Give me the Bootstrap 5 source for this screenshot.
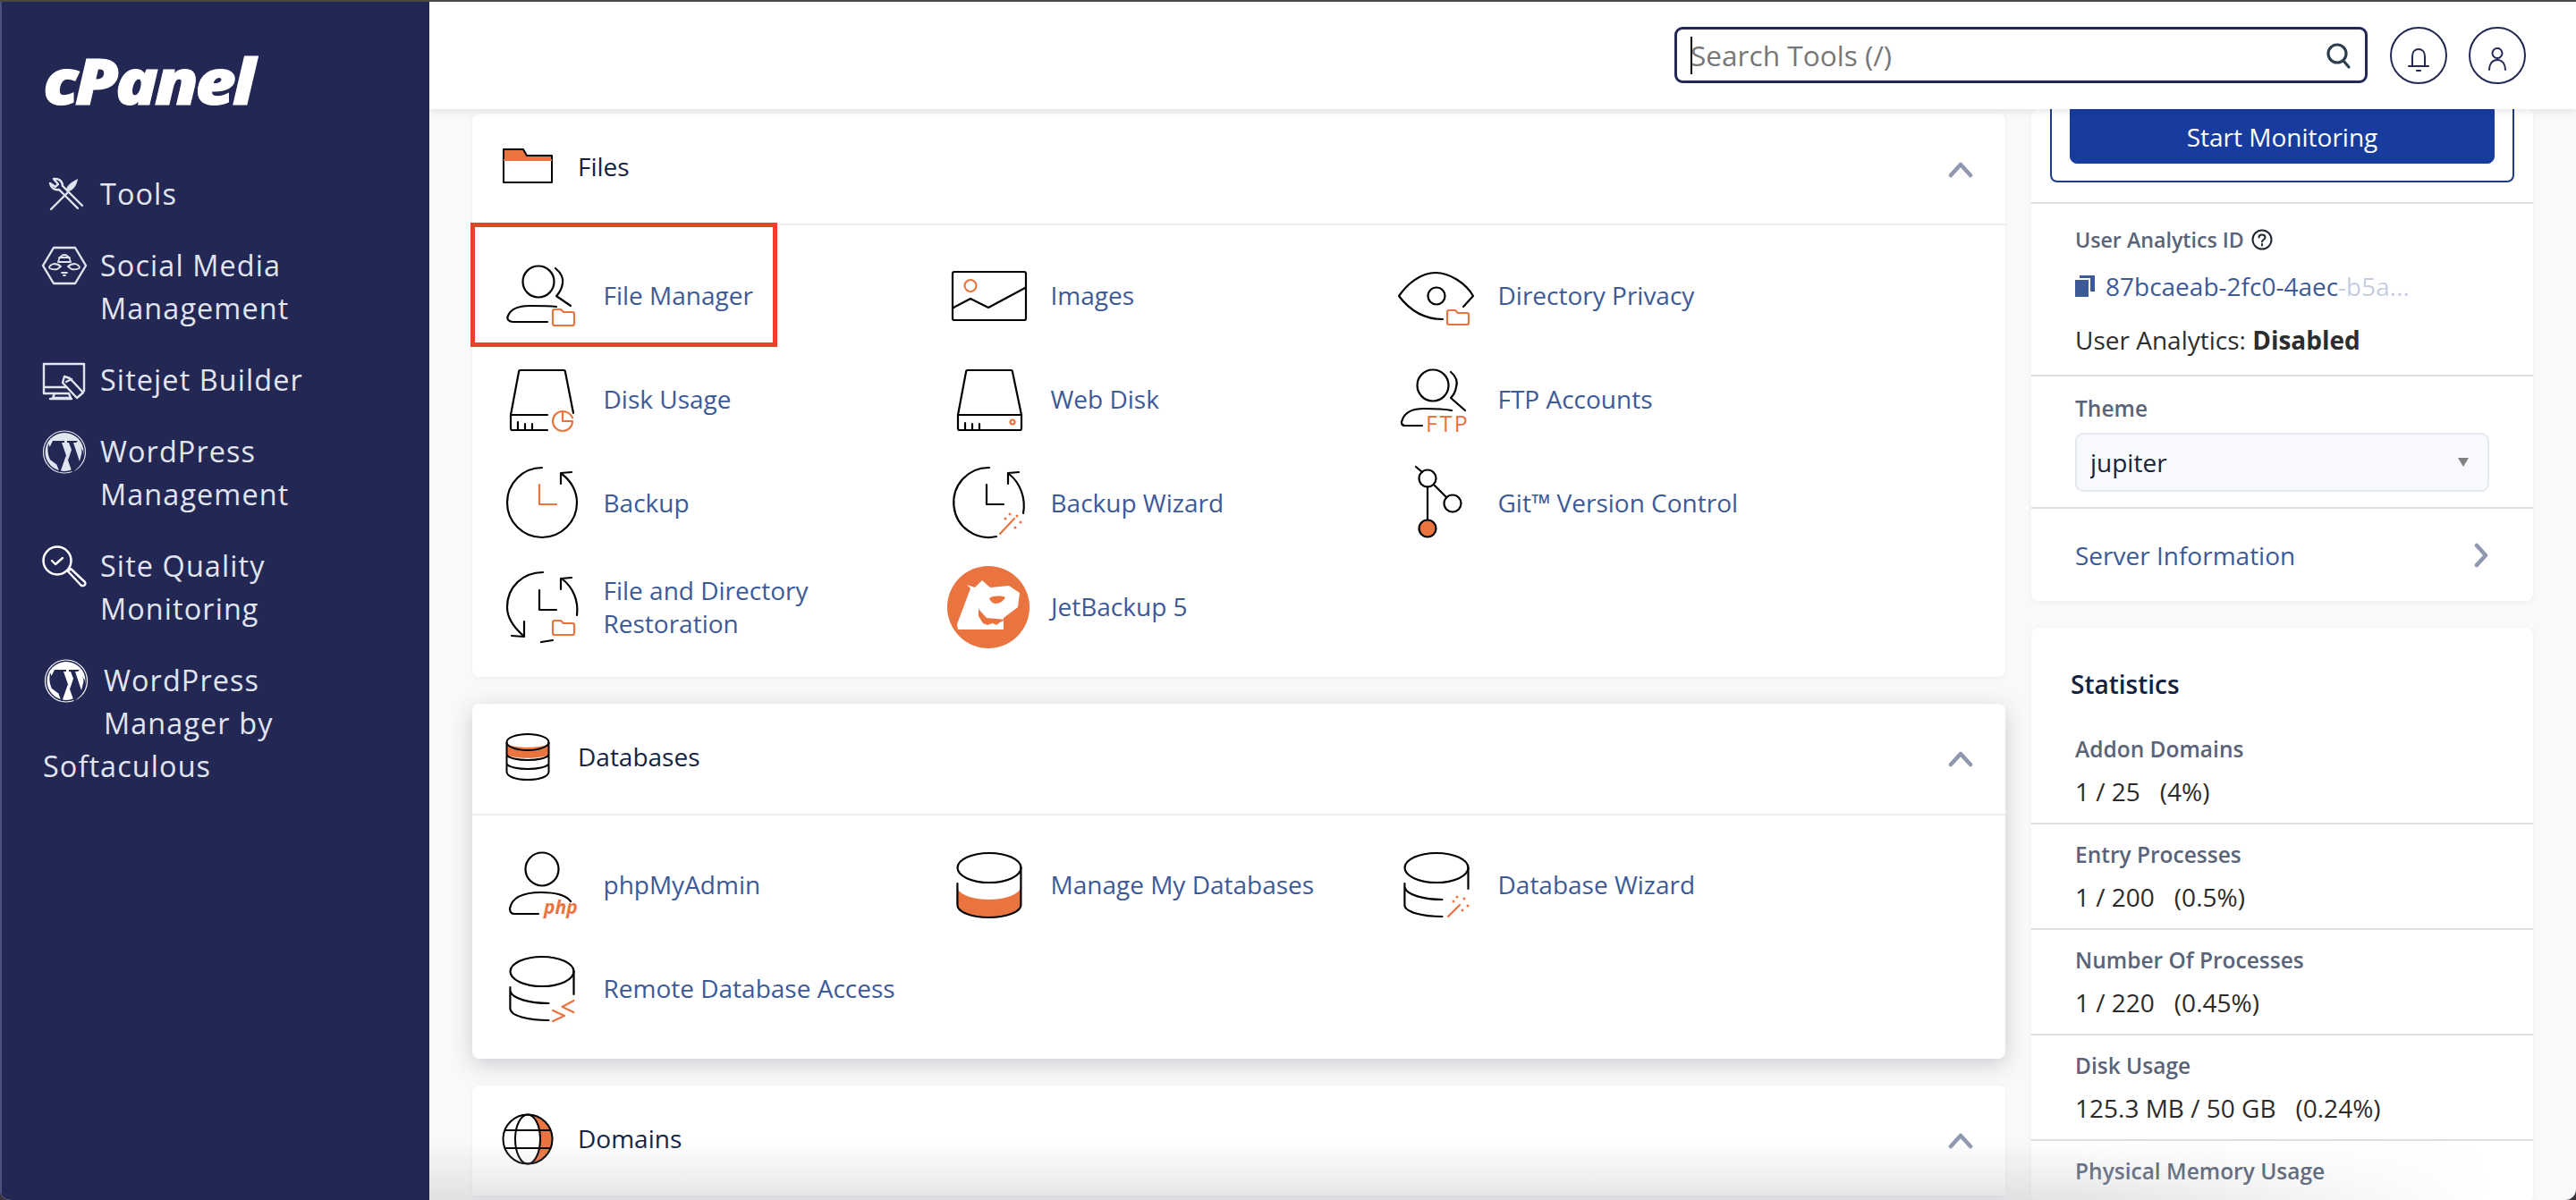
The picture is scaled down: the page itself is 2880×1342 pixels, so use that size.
<!DOCTYPE html>
<html lang="en">
<head>
<meta charset="utf-8">
<title>cPanel - Tools</title>
<link href="https://cdn.jsdelivr.net/npm/bootstrap@5.3.0/dist/css/bootstrap.min.css" rel="stylesheet">
<style>
html,body{height:1342px;overflow:hidden;background:#3b343c}
body{font-family:"Open Sans","Liberation Sans",sans-serif;font-size:28px;color:#2d2d2d}
.win{height:1342px;border-top:2px solid #4a4943;border-radius:0 0 12px 12px;overflow:hidden;background:#f9f9f9;position:relative}
.side{width:480px;flex:none;background:#232754;border-left:2px solid #4c5182;padding:0 0 0 46px;color:#e1e5f0}
.brand{height:190px;padding-top:58px}
.brand span{display:inline-block;font-weight:800;font-style:italic;font-size:71px;line-height:60px;letter-spacing:-3.5px;color:#fff;-webkit-text-stroke:1px #fff;transform:scaleX(1.11);transform-origin:left center}
.side-menu{display:flex;flex-direction:column;gap:32px;font-size:32.4px;line-height:48px;letter-spacing:1.1px;width:360px}
.side-menu a{color:inherit;text-decoration:none;display:block}
.side-ico{width:48px;height:48px;margin-right:16px;overflow:visible;fill:none;stroke:#e1e5f0;stroke-width:2.4;stroke-linecap:round;stroke-linejoin:round}
.side-ico.tall{margin-bottom:40px}
.side-ico.shifted{margin-right:20px}
.side-ico .solid{fill:#e1e5f0;stroke:none}
.side-ico.white,.side-ico .brite{stroke:#fff}.side-ico.white .solid{fill:#fff}
.side-ico .cut{fill:#232754;stroke:none}
.topbar{flex:0 0 120px;background:#fff;box-shadow:0 2px 10px rgba(0,0,0,.1);position:relative;z-index:5;padding-top:28px;padding-right:56px}
.search-box{width:775px;height:63px;border:3px solid #232754;border-radius:9px;position:relative;background:#fff}
.search-box input{border:0;box-shadow:none;height:100%;font-size:31.6px;padding:0 60px 0 15px;background:transparent;color:#333;font-family:inherit}
.search-box input::placeholder{color:#777;opacity:1}
.caret-mark{position:absolute;left:15px;top:8px;width:2px;height:42px;background:#000}
.search-btn{position:absolute;right:14px;top:15px;width:30px;height:30px;fill:none;stroke:#2c3e50;stroke-width:3.2;stroke-linecap:round}
.round-btn{width:64px;height:64px;border:2.5px solid #232754;border-radius:50%;background:#fff;padding:0;margin-left:24px;flex:none}
.search-box + .round-btn{margin-left:25px}
.round-btn svg{width:32px;height:32px;fill:none;stroke:#232754;stroke-width:2;stroke-linecap:round}
.content-row{flex:1 1 0;min-height:0}
.left-col{width:1714px;margin-left:48px;padding-top:5px;flex:none}
.right-col{width:561px;margin-left:29px;flex:none}
.panel{border:0;border-radius:8px;background:#fff;box-shadow:0 1px 5px rgba(0,0,0,.05);margin-bottom:30px}
.panel.raised{box-shadow:0 6px 24px rgba(40,45,70,.22)}
.panel .card-header{height:125px;background:#fff;border-bottom:2px solid #eceef4;border-radius:8px 8px 0 0;padding:0 37px 5px 32px;color:#14233f;font-size:28px}
.head-ico{width:60px;height:60px;margin-right:26px;margin-bottom:-2px;fill:none;stroke:#000;stroke-width:2;stroke-linejoin:round}
.head-chev{width:28px;height:18px;fill:none;stroke:#8f98ae;stroke-width:4.5;stroke-linecap:round;stroke-linejoin:round;margin-right:-1px;margin-top:7px}
.tools-grid{display:grid;grid-template-columns:repeat(3,500px);row-gap:36.2px;padding:38px 37px 38px}
.tool-item{display:flex;align-items:center;color:#3d5a98;text-decoration:none;line-height:36.6px;height:80px;font-size:28px}
.tool-ico{width:80px;height:80px;margin-right:29.500px;flex:none;overflow:visible;fill:none;stroke:#000;stroke-width:2.2;stroke-linecap:round;stroke-linejoin:round}
.tool-ico .o{stroke:#e9743f}
.tool-ico .of{fill:#e9743f;stroke:none}
.tool-ico text{font-family:"Open Sans",sans-serif;fill:#e9743f;stroke:none}
.jet-ico{width:92px;height:92px;margin:0 24px 0 -6px;flex:none}
.hilite{position:absolute;left:-2px;top:122px;width:343px;height:139px;border:5px solid #e6432a;pointer-events:none}
.sect{border-top:2px solid #dfdfdf;padding-left:49px;padding-right:49px}
.sect-id{height:193px;padding-top:22px}
.sect-theme{height:148px;padding-top:18px}
.sect-server{height:105px}
.mon-box{border:2px solid #1e3a8a;border-top:0;border-radius:0 0 8px 8px;margin:0 21px 22px;padding:0 20px 20px;height:82px}
.mon-btn{background:#183c9e;border-color:#183c9e;border-radius:0 0 8px 8px;height:61px;font-size:28px;font-weight:500;color:#fff;padding:0}
.lbl{font-size:24.5px;font-weight:600;color:#5a6478;line-height:36px}
.lbl.tight{font-size:23.2px}
.theme-lbl{margin-bottom:9px}
.uid{color:#3d5a98;font-size:28px;line-height:40px;white-space:nowrap;margin-top:14px}
.uid i{font-style:normal;opacity:.3}
.ua-state{line-height:40px;font-size:28px;margin-top:20px}
.theme-sel{height:66px;background-color:#f7f9fd;border:2px solid #e4e8f0;border-radius:9px;font-size:28px;color:#1b2236;padding:0 15px;font-family:inherit;width:463px;
background-image:url("data:image/svg+xml,%3Csvg xmlns='http://www.w3.org/2000/svg' viewBox='0 0 12 10'%3E%3Cpath fill='%23808080' d='M0 0h12L6 10z'/%3E%3C/svg%3E");background-size:12px 10px;background-position:right 21px center}
.server-row{color:#3d5a98;text-decoration:none}
.stats-head{height:100px;padding:44px 0 0 44px;font-size:28px;font-weight:600;color:#13233f;line-height:38px}
.stats-row{padding:16px 49px 15px;border-bottom:0}
.stats-row:first-child{padding-top:18px}
.stats-row + .stats-row{border-top:2px solid #dfdfdf!important}
.stats-val{font-size:28px;line-height:40px;margin-top:9px;color:#2b2b2b}
.stats-val span{margin-left:22px}
.fade-foot{position:absolute;left:480px;right:100px;bottom:0;height:66px;background:linear-gradient(to top,rgba(185,186,192,.38),rgba(185,186,192,0));-webkit-mask-image:linear-gradient(to right,#000 80%,transparent);mask-image:linear-gradient(to right,#000 80%,transparent);z-index:6;pointer-events:none}
</style>
</head>
<body>
<div class="win d-flex">
  <aside class="side">
    <div class="brand"><span>cPanel</span></div>
    <nav class="side-menu">
      <a href="#"><svg class="side-ico float-start" viewBox="0 0 48 48"><path d="M39 41 18 20c-5 1-9-2-10-7l6 4 3-3-5-6c6-1 10 3 10 8l22 22"/><path d="M9 42l19-19"/><path class="solid" d="M26 21c0-5 5-9 13-13-1 7-5 13-11 14z"/></svg>Tools</a>
      <a href="#"><svg class="side-ico tall float-start" viewBox="0 0 48 48"><path d="M12 5h24l12 20-12 20H12L0 25z"/><path d="M17 21c1-5 4-8 7-8s6 3 7 8zM18 16h12M12 23c-3 1-5 3-5 4s3 3 9 2l4-3c-2-2-5-3-8-3zM36 23c3 1 5 3 5 4s-3 3-9 2l-4-3c2-2 5-3 8-3zM21 33h6M23 36h2" stroke-width="1.8"/></svg>Social Media<br>Management</a>
      <a href="#"><svg class="side-ico float-start" viewBox="0 0 48 48"><path d="M28 40H1V7h45v30"/><path d="M1 33h26M13 40l-2 5h20l-2-5M8 46h24"/><path d="M24 21l-2 7 16 17 7-6-15-16z" fill="#232754"/><path d="M26 27l6-3"/></svg>Sitejet Builder</a>
      <a href="#"><svg class="side-ico tall float-start" viewBox="0 0 48 48"><circle cx="24" cy="25.500" r="23.500" stroke-width="1.200"/><circle class="solid" cx="24" cy="25.500" r="21.500"/><path class="cut" d="M6 16l10 24-8-6c-3-6-3-12-2-18zM11 13h13v2h-3l7 20 4-12-3-8h-2v-2h12l-2 2h-3l7 21 2-8c1-3 0-6-2-9l4 6c1 5 0 11-4 16l-8 8-7-20-7 20-10-26h-3z"/></svg>WordPress<br>Management</a>
      <a href="#"><svg class="side-ico tall float-start" viewBox="0 0 48 48"><circle class="brite" cx="16" cy="19" r="15.500" stroke-width="2.500"/><path class="brite" d="M10 19l4 4 8-7"/><path class="brite" d="M28 31l3-3 16 15c1 2 0 4-2 4h-2z"/></svg>Site Quality<br>Monitoring</a>
      <a href="#"><svg class="side-ico white tall shifted float-start" viewBox="0 0 48 48"><circle cx="26" cy="25.500" r="23.500" stroke-width="1.200"/><circle class="solid" cx="26" cy="25.500" r="21.500"/><path class="cut" d="M8 16l10 24-8-6c-3-6-3-12-2-18zM13 13h13v2h-3l7 20 4-12-3-8h-2v-2h12l-2 2h-3l7 21 2-8c1-3 0-6-2-9l4 6c1 5 0 11-4 16l-8 8-7-20-7 20-10-26h-3z"/></svg>WordPress<br>Manager by<br>Softaculous</a>
    </nav>
  </aside>
  <div class="flex-grow-1 d-flex flex-column">
    <header class="topbar d-flex justify-content-end">
      <div class="search-box">
        <input class="form-control" type="text" placeholder="Search Tools (/)" aria-label="Search Tools">
        <span class="caret-mark"></span>
        <svg class="search-btn" viewBox="0 0 30 30"><circle cx="13" cy="12" r="10"/><path d="M20 20l6 7"/></svg>
      </div>
      <button class="round-btn" aria-label="Notifications"><svg viewBox="0 0 32 32"><path d="M9 24V13c0-5 3-8 7-8s7 3 7 8v11M5 24h22M14 29h4"/></svg></button>
      <button class="round-btn" aria-label="Account"><svg viewBox="0 0 32 32"><circle cx="16" cy="9.500" r="5.500"/><path d="M7 28c0-6 3-11 9-11s9 5 9 11"/></svg></button>
    </header>
    <div class="d-flex content-row overflow-hidden">
      <main class="left-col">
        <section class="card panel">
          <div class="card-header d-flex align-items-center">
            <svg class="head-ico" viewBox="0 0 60 60"><path fill="#e9743f" stroke="none" d="M3 11h22l4 6h28v5H3z"/><path d="M3 10h22l4 7h28v30H3zM3 22h54" stroke-width="2"/><path d="M3 22h54" stroke="#e9743f" stroke-width="2"/></svg>
            <span>Files</span>
            <svg class="head-chev ms-auto" viewBox="0 0 28 18"><path d="M3 15 14 3l11 12"/></svg>
          </div>
          <div class="tools-grid">
            <a class="tool-item" href="#"><svg class="tool-ico" viewBox="0 0 80 80"><circle cx="37" cy="25" r="17.500"/><path d="M56 10c6 5 9 11 8 17-1 6-3 10-7 14l16 11"/><path d="M47 70H9c-5 0-8-3-6-7 3-7 12-11 24-11 11 0 22 0 30 1"/><path class="o" d="M53 58a2 2 0 0 1 2-2h7l3 3h10a2 2 0 0 1 2 2v11a2 2 0 0 1-2 2H55a2 2 0 0 1-2-2z"/></svg>File Manager</a>
            <a class="tool-item" href="#"><svg class="tool-ico" viewBox="0 0 80 80"><rect x="0" y="14" width="82" height="54" rx="2"/><circle class="o" cx="20" cy="29.500" r="6.500"/><path d="M1 54l19-10 20 10 41-22"/></svg>Images</a>
            <a class="tool-item" href="#"><svg class="tool-ico" viewBox="0 0 80 80"><circle cx="41" cy="41" r="9.500"/><path d="M71 53l11-12C74 27 56 15 40 15 23 15 8 28-1 41c9 12 24 26 49 26"/><path class="o" d="M53 59a2 2 0 0 1 2-2h7l3 3h10a2 2 0 0 1 2 2v9a2 2 0 0 1-2 2H55a2 2 0 0 1-2-2z"/></svg>Directory Privacy</a>

            <a class="tool-item" href="#"><svg class="tool-ico" viewBox="0 0 80 80"><path d="M47 75H8c-1 0-2-1-2-2V58l9-48c0-1 1-2 2-2h48c1 0 2 1 2 2l9 46M6 58h41M14 66v9M22 68v7M30 68v7"/><path class="o" d="M64 54a11 11 0 1 0 11 11H64zM64 54c5 0 9 3 11 7"/></svg>Disk Usage</a>
            <a class="tool-item" href="#"><svg class="tool-ico" viewBox="0 0 80 80"><path d="M8 75h67c1 0 2-1 2-2V58l-10-48c0-1-1-2-2-2H17c-1 0-2 1-2 2L6 58v15c0 1 1 2 2 2zM6 58h71M14 67v8M22 68v7M30 68v7"/><circle class="o" cx="67" cy="66" r="2.500"/></svg>Web Disk</a>
            <a class="tool-item" href="#"><svg class="tool-ico" viewBox="0 0 80 80"><circle cx="37" cy="25" r="17.500"/><path d="M57 10c6 5 8 11 6 17-1 6-3 9-6 12l16 14"/><path d="M25 70H6c-4 0-5-3-3-7 3-8 12-12 24-12 10 0 21 0 31 2"/><text x="29" y="76.500" font-size="25" letter-spacing="2.500">FTP</text></svg>FTP Accounts</a>

            <a class="tool-item" href="#"><svg class="tool-ico" viewBox="0 0 80 80"><path d="M41 1A39 39 0 1 0 80 40c0-12-6-24-17-32"/><path d="M62 19V7l12-1"/><path class="o" d="M38 20V42H57"/></svg>Backup</a>
            <a class="tool-item" href="#"><svg class="tool-ico" viewBox="0 0 80 80"><path d="M41 1A39 39 0 1 0 49 78M79 52c3-16-3-34-16-44"/><path d="M62 19V7l12-1"/><path d="M38 20V42H57"/><path class="o" d="M53 75 69 58"/><g class="of"><circle cx="59" cy="58" r="1.500"/><circle cx="64" cy="53" r="1.500"/><circle cx="72" cy="55" r="1.500"/><circle cx="76" cy="62" r="1.500"/><circle cx="70" cy="68" r="1.500"/></g></svg>Backup Wizard</a>
            <a class="tool-item" href="#"><svg class="tool-ico" viewBox="0 0 80 80"><circle cx="31" cy="13" r="9.500"/><circle cx="59" cy="41" r="9.500"/><circle cx="31" cy="69" r="9.500" fill="#e9743f"/><path d="M31 22.500V59.500M38 20l14 14M18 0l7 6"/></svg>Git™ Version Control</a>

            <a class="tool-item" href="#"><svg class="tool-ico" viewBox="0 0 80 80"><path d="M42 1C20 1 2 17 2 40c0 11 6 21 17 31"/><path d="M21 56V73L7 72"/><path d="M80 49c2-16-4-31-17-41"/><path d="M62 20V8l12-1"/><path d="M38 21V43H57M40 79l13-2"/><path class="o" d="M53 57a2 2 0 0 1 2-2h7l3 3h10a2 2 0 0 1 2 2v9a2 2 0 0 1-2 2H55a2 2 0 0 1-2-2z"/></svg><span>File and Directory<br>Restoration</span></a>
            <a class="tool-item" href="#"><svg class="jet-ico" viewBox="0 0 92 92"><circle cx="46" cy="46" r="46" fill="#e9743f"/><path fill="#fff" d="M22 21l9 3 8-8 9 8 21-2 12 8-2 16-16 12v13H12l-1-6 15-40z"/><path fill="#e9743f" d="M47 36c5-3 13-3 18-1-2 4-6 7-11 7-3 0-6-3-7-6zM35 48l9 10 21 2-6 3-4 3-4-2-6 2-5-2-5-8z"/></svg>JetBackup 5</a>
          </div>
          <div class="hilite"></div>
        </section>

        <section class="card panel raised">
          <div class="card-header d-flex align-items-center">
            <svg class="head-ico" viewBox="0 0 60 60"><path fill="#e9743f" stroke="none" d="M7 15c6 5 40 5 46 0v12c-6 5-40 5-46 0z"/><ellipse cx="30" cy="13" rx="23.500" ry="9"/><path d="M6.500 13v33c0 12 47 12 47 0V13M6.500 27c4 8 43 8 47 0M6.500 37c4 8 43 8 47 0"/></svg>
            <span>Databases</span>
            <svg class="head-chev ms-auto" viewBox="0 0 28 18"><path d="M3 15 14 3l11 12"/></svg>
          </div>
          <div class="tools-grid">
            <a class="tool-item" href="#"><svg class="tool-ico" viewBox="0 0 80 80"><circle cx="41" cy="22" r="18.500"/><path d="M37 72H10c-3 0-5-2-5-6 2-11 13-18 35-18 15 0 27 2 33 10"/><text x="43" y="72" font-size="21" font-weight="700" font-style="italic">php</text></svg>phpMyAdmin</a>
            <a class="tool-item" href="#"><svg class="tool-ico" viewBox="0 0 80 80"><path class="of" d="M5.400 44C10 52 25 56 41 56c15 0 30-4 35-12v18c0 8-16 14-35 14S5.400 70 5.400 62z"/><ellipse cx="41" cy="20.500" rx="35.500" ry="16.500"/><path d="M5.400 38V62c0 8 16 14 35 14s36-6 36-14V20"/></svg>Manage My Databases</a>
            <a class="tool-item" href="#"><svg class="tool-ico" viewBox="0 0 80 80"><ellipse cx="41" cy="20.500" rx="35.500" ry="16.500"/><path d="M76.500 20v24M5.400 38V62c0 8 20 13 42 13M5.400 42c2 9 22 14 42 14"/><path class="o" d="M54 75 67 62"/><g class="of"><circle cx="60" cy="58" r="1.500"/><circle cx="64" cy="53" r="1.500"/><circle cx="72" cy="55" r="1.500"/><circle cx="76" cy="63" r="1.500"/><circle cx="70" cy="68" r="1.500"/></g></svg>Database Wizard</a>
            <a class="tool-item" href="#"><svg class="tool-ico" viewBox="0 0 80 80"><ellipse cx="41" cy="20.500" rx="35.500" ry="16.500"/><path d="M76.500 20v26M5.400 38V62c0 8 20 13 43 13M5.400 42c2 9 22 14 43 14"/><path class="o" d="M76.500 53 63.500 60l13 6M53 64l13 6-13 6"/></svg>Remote Database Access</a>
          </div>
        </section>

        <section class="card panel">
          <div class="card-header d-flex align-items-center">
            <svg class="head-ico" viewBox="0 0 60 60"><path fill="#e9743f" stroke="none" d="M33 3c13 2 24 13 24 27S46 55 33 57c7-4 10-15 10-27S40 7 33 3z"/><circle cx="30" cy="30" r="27.500"/><ellipse cx="30" cy="30" rx="14" ry="27.500"/><path d="M4 20h52M4 40h52"/></svg>
            <span>Domains</span>
            <svg class="head-chev ms-auto" viewBox="0 0 28 18"><path d="M3 15 14 3l11 12"/></svg>
          </div>
        </section>
      </main>

      <aside class="right-col">
        <section class="card panel">
          <div class="mon-box"><button class="btn btn-primary mon-btn w-100" type="button">Start Monitoring</button></div>
          <div class="sect sect-id">
            <div class="d-flex align-items-center lbl tight">User Analytics ID<svg class="ms-2" width="24" height="24" viewBox="0 0 24 24" fill="none" stroke="#1f2733" stroke-width="2"><circle cx="12" cy="12" r="10.500"/><path d="M8.500 9.500c0-2 1.500-3 3.500-3s3.500 1.200 3.500 3c0 2.500-3.500 2.500-3.500 5M12 17v1.500" stroke-linecap="round"/></svg></div>
            <div class="uid d-flex align-items-center"><svg width="22" height="24" viewBox="0 0 22 24" class="me-2" fill="#3d5a98"><path d="M0 5h15v19H0z"/><path d="M5 0h17v18h-5V3H5z"/></svg><span class="ms-1">87bcaeab-2fc0-4aec<i>-b5a...</i></span></div>
            <div class="ua-state">User Analytics: <b>Disabled</b></div>
          </div>
          <div class="sect sect-theme">
            <label class="lbl d-block theme-lbl" for="theme">Theme</label>
            <select class="form-select theme-sel" id="theme"><option>jupiter</option></select>
          </div>
          <a class="sect sect-server server-row d-flex align-items-center justify-content-between" href="#">
            <span>Server Information</span>
            <svg width="18" height="28" viewBox="0 0 18 28" fill="none" stroke="#8f98ae" stroke-width="4.500" stroke-linecap="round" stroke-linejoin="round"><path d="M4 3l10 11L4 25"/></svg>
          </a>
        </section>

        <section class="card panel">
          <div class="stats-head">Statistics</div>
          <ul class="list-group list-group-flush">
            <li class="list-group-item stats-row"><div class="lbl">Addon Domains</div><div class="stats-val">1 / 25<span>(4%)</span></div></li>
            <li class="list-group-item stats-row"><div class="lbl">Entry Processes</div><div class="stats-val">1 / 200<span>(0.5%)</span></div></li>
            <li class="list-group-item stats-row"><div class="lbl">Number Of Processes</div><div class="stats-val">1 / 220<span>(0.45%)</span></div></li>
            <li class="list-group-item stats-row"><div class="lbl">Disk Usage</div><div class="stats-val">125.3 MB / 50 GB<span>(0.24%)</span></div></li>
            <li class="list-group-item stats-row"><div class="lbl">Physical Memory Usage</div></li>
          </ul>
        </section>
      </aside>
    </div>
  </div>
  <div class="fade-foot"></div>
</div>
<script src="https://cdn.jsdelivr.net/npm/bootstrap@5.3.0/dist/js/bootstrap.bundle.min.js"></script>
</body>
</html>
